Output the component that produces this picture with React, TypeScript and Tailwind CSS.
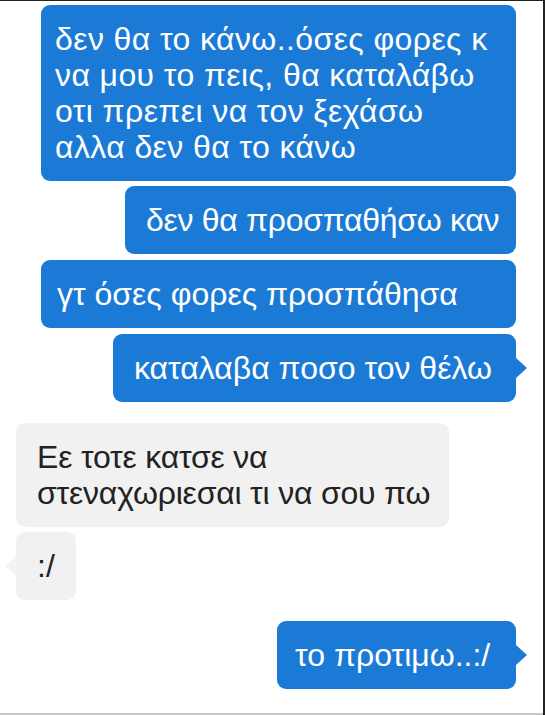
import React from 'react';

type Msg = {
  side: 'me' | 'them';
  lines: string[];
  tail?: boolean;
  box: string;
};

// box widths and left padding read off the screenshot
const messages: Msg[] = [
  {
    side: 'me',
    lines: ['δεν θα το κάνω..όσες φορες κ', 'να μου το πεις, θα καταλάβω', 'οτι πρεπει να τον ξεχάσω', 'αλλα δεν θα το κάνω'],
    box: 'mt-[4px] w-[475px] pl-[14px] tracking-[0.4px]',
  },
  { side: 'me', lines: ['δεν θα προσπαθήσω καν'], box: 'mt-[5px] w-[391px] pl-[21px] tracking-[-0.3px]' },
  { side: 'me', lines: ['γτ όσες φορες προσπάθησα'], box: 'mt-[6px] w-[475px] pl-[16px]' },
  { side: 'me', lines: ['καταλαβα ποσο τον θέλω'], tail: true, box: 'mt-[6px] w-[403px] pl-[21px]' },
  { side: 'them', lines: ['Εε τοτε κατσε να', 'στεναχωριεσαι τι να σου πω'], box: 'mt-[21px] w-[433px] pl-[21px] tracking-[-0.2px]' },
  { side: 'them', lines: [':/'], tail: true, box: 'mt-[5px] w-[60px] pl-[21px]' },
  { side: 'me', lines: ['το προτιμω..:/'], tail: true, box: 'mt-[21px] w-[239px] pl-[18px]' },
];

const Bubble: React.FC<{ msg: Msg }> = ({ msg }) => {
  const mine = msg.side === 'me';
  return (
    <div className={`flex ${mine ? 'justify-end' : 'justify-start'}`}>
      <div
        className={`relative rounded-[9px] py-[16px] text-[32px] leading-[36px] ${msg.box} ${
          mine ? 'bg-[#1b7ad6] text-white' : 'bg-[#f1f1f1] text-[#222222]'
        }`}
      >
        {msg.lines.map((l, i) => (
          <div key={i} className="whitespace-nowrap">
            {l}
          </div>
        ))}
        {msg.tail && mine && (
          <div className="absolute right-[-11px] top-1/2 -translate-y-1/2 w-0 h-0 border-y-[10px] border-y-transparent border-l-[11px] border-l-[#1b7ad6]" />
        )}
        {msg.tail && !mine && (
          <div className="absolute left-[-11px] top-1/2 -translate-y-1/2 w-0 h-0 border-y-[10px] border-y-transparent border-r-[11px] border-r-[#f3f3f3]" />
        )}
      </div>
    </div>
  );
};

export default function App() {
  return (
    <div
      className="w-[545px] h-[715px] bg-white overflow-hidden flex flex-col border-t border-t-[#222] border-r-2 border-r-[#222]"
      style={{ fontFamily: '"Liberation Sans", Arial, sans-serif' }}
    >
      <div className="flex-1 flex flex-col pl-[16px] pr-[27px]">
        {messages.map((m, i) => (
          <Bubble key={i} msg={m} />
        ))}
      </div>
      <div className="h-[2px] bg-[#c8c8c8]" />
    </div>
  );
}
